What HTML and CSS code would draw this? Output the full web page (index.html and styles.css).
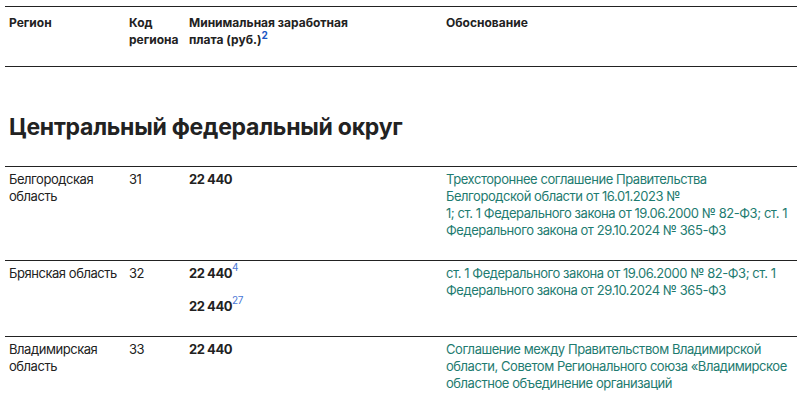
FILE: index.html
```html
<!DOCTYPE html>
<html lang="ru">
<head>
<meta charset="utf-8">
<link rel="stylesheet" href="styles.css">
</head>
<body>
<div class="page">
  <div class="row head">
    <div class="cell">Регион</div>
    <div class="cell">Код<br>региона</div>
    <div class="cell">Минимальная заработная<br>плата (руб.)<sup class="hsup">2</sup></div>
    <div class="cell">Обоснование</div>
  </div>
  <h2 class="district">Центральный федеральный округ</h2>
  <div class="row">
    <div class="cell">Белгородская<br>область</div>
    <div class="cell">31</div>
    <div class="cell"><p class="wage">22 440</p></div>
    <div class="cell basis">Трехстороннее соглашение Правительства<br>Белгородской области от 16.01.2023 №<br>1; ст. 1 Федерального закона от 19.06.2000 № 82-ФЗ; ст. 1 Федерального закона от 29.10.2024 № 365-ФЗ</div>
  </div>
  <div class="row">
    <div class="cell">Брянская область</div>
    <div class="cell">32</div>
    <div class="cell"><p class="wage">22 440<sup>4</sup></p><p class="wage">22 440<sup>27</sup></p></div>
    <div class="cell basis">ст. 1 Федерального закона от 19.06.2000 № 82-ФЗ; ст. 1 Федерального закона от 29.10.2024 № 365-ФЗ</div>
  </div>
  <div class="row">
    <div class="cell">Владимирская<br>область</div>
    <div class="cell">33</div>
    <div class="cell"><p class="wage">22 440</p></div>
    <div class="cell basis">Соглашение между Правительством Владимирской области, Советом Регионального союза «Владимирское областное объединение организаций</div>
  </div>
</div>
</body>
</html>
```

FILE: styles.css
```css
html, body {
  margin: 0;
  padding: 0;
  background: #fff;
}
.page {
  margin: 6px 7px 0 5px;
  font-family: Inter, "Open Sans", sans-serif;
  font-size: 13px;
  line-height: 17px;
  letter-spacing: -0.45px;
  color: #222;
}
.row {
  display: grid;
  grid-template-columns: 120px 60px 257px 1fr;
  border-top: 1px solid #222;
}
.cell {
  padding: 4px 4px 21px 4px;
}
.head {
  border-bottom: 1px solid #222;
  font-weight: 700;
  font-size: 12px;
  letter-spacing: 0;
}
.head .cell {
  padding: 7px 4px 18px 4px;
}
.hsup {
  color: #1a56c4;
  font-size: 10px;
  line-height: 0;
  vertical-align: 5px;
}
.district {
  margin: 47px 0 25px 4px;
  font-size: 23px;
  line-height: 27px;
  font-weight: 700;
  letter-spacing: -0.25px;
  color: #222;
}
.wage {
  margin: 0 0 16px;
  font-weight: 700;
}
.wage:last-child {
  margin-bottom: 0;
}
.wage sup {
  color: #4a78d6;
  font-weight: 400;
  font-size: 10px;
  line-height: 0;
  vertical-align: 7px;
}
.basis {
  color: #1e7b70;
}
```
